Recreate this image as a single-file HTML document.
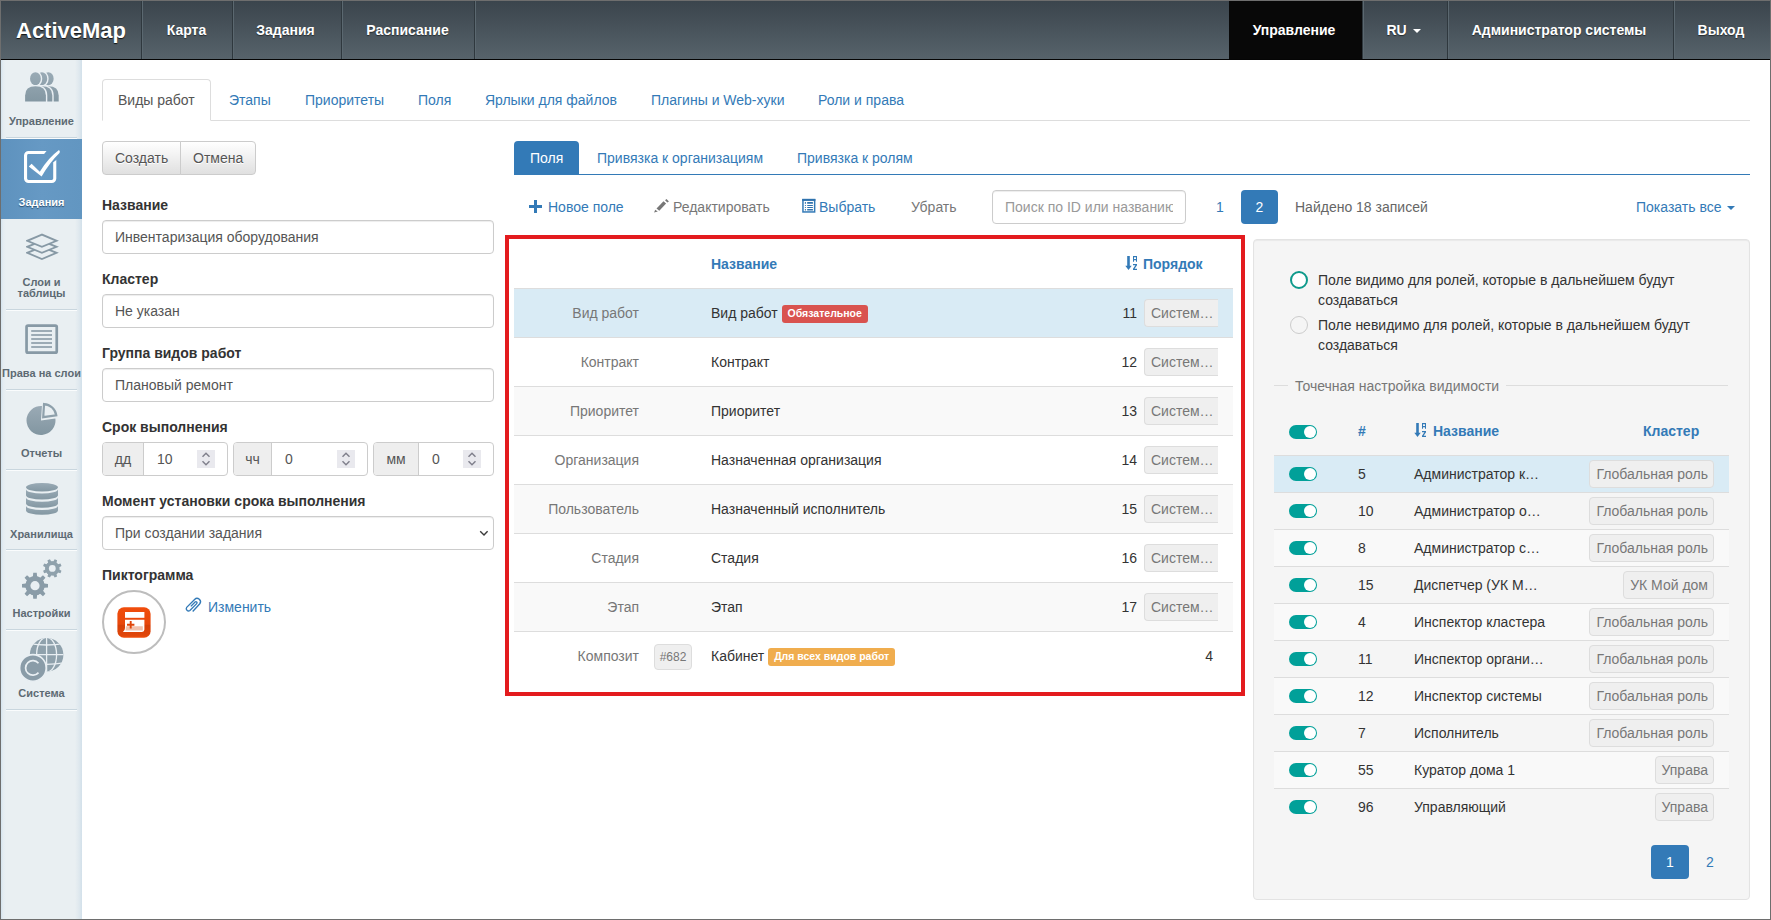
<!DOCTYPE html>
<html><head><meta charset="utf-8">
<style>
*{box-sizing:border-box;margin:0;padding:0}
html,body{width:1771px;height:920px;overflow:hidden;background:#fff}
body{font-family:"Liberation Sans",sans-serif;font-size:14px;color:#333;line-height:20px;position:relative}
.abs{position:absolute}
#frame{position:absolute;left:0;top:0;width:1771px;height:920px;border:1px solid #6e6e6e;pointer-events:none;z-index:50}
/* navbar */
#nav{position:absolute;left:0;top:0;width:1771px;height:60px;background:linear-gradient(#3a444c,#57636b);border-bottom:1px solid #050505}
.brand{position:absolute;left:16px;top:18px;font-size:22px;font-weight:bold;color:#fff;line-height:26px;text-shadow:0 1px 1px #111}
.ni{position:absolute;top:1px;height:58px;line-height:58px;color:#fff;font-weight:bold;font-size:14px;text-align:center;text-shadow:0 1px 1px rgba(0,0,0,.5)}
.sep{position:absolute;top:1px;height:58px;width:2px;border-left:1px solid #2f383e;border-right:1px solid #5b6870}
/* sidebar */
#side{position:absolute;left:1px;top:60px;width:81px;height:859px;background:linear-gradient(90deg,#d3e3ee 0,#e4ecf1 2px,#e9eff2 5px,#e9eff2 74px,#dfe8ee 78px,#d2e0ea 81px)}
.sitem{position:absolute;left:0;width:81px;text-align:center;font-size:11px;font-weight:bold;color:#5d6a73;line-height:12px}
.ssep{position:absolute;left:5px;width:71px;height:2px;border-top:1px solid #c9d6de;border-bottom:1px solid #fafcfd}
/* tabs */
.tab{position:absolute;top:79px;height:42px;line-height:20px;padding:10px 15px;color:#337ab7;border:1px solid transparent}
.tab.act{border:1px solid #ddd;border-bottom-color:#fff;border-radius:4px 4px 0 0;color:#555;background:#fff}
.lbl{position:absolute;left:102px;font-weight:bold;color:#333}
.inp{position:absolute;left:102px;width:392px;height:34px;border:1px solid #ccc;border-radius:4px;padding:6px 12px;color:#555;box-shadow:inset 0 1px 1px rgba(0,0,0,.075)}
.btn{position:absolute;height:34px;padding:6px 12px;border:1px solid #ccc;background:linear-gradient(#fff,#e0e0e0);color:#555;text-shadow:0 1px 0 #fff}
a,.link{color:#337ab7;text-decoration:none}
.mut{color:#777}
.row{position:absolute;left:514px;width:719px;height:49px;border-top:1px solid #ddd}
.c1{position:absolute;right:594px;top:14px;color:#777;white-space:nowrap}
.c2{position:absolute;left:197px;top:14px;color:#333;white-space:nowrap}
.c3{position:absolute;right:96px;top:14px;color:#333}
.sysb{position:absolute;left:630px;top:10px;width:74px;height:28px;border:1px solid #ddd;border-right:none;border-radius:4px 0 0 4px;background:#efefef;color:#777;padding:3px 0 0 6px;overflow:hidden;white-space:nowrap}
.lab{display:inline-block;font-size:10.5px;font-weight:bold;color:#fff;line-height:1;padding:3px 6px 4px;border-radius:3px;vertical-align:1px}
.rrow{position:absolute;left:1274px;width:455px;height:37px;border-top:1px solid #ddd}
.tog{position:absolute;left:15px;width:28px;height:14px;border-radius:7px;background:#01a099}
.tog:after{content:"";position:absolute;right:1.3px;top:1px;width:12px;height:12px;border-radius:50%;background:#fff}
.rn{position:absolute;left:84px;top:8px}
.rname{position:absolute;left:140px;top:8px;white-space:nowrap}
.spin{position:absolute;top:7px;width:18px;height:18px;background:#e9e9ee}
.spin:before{content:"";position:absolute;left:5px;top:4px;width:5px;height:5px;border-left:1.3px solid #666;border-top:1.3px solid #666;transform:rotate(45deg)}
.spin:after{content:"";position:absolute;left:5px;top:8px;width:5px;height:5px;border-right:1.3px solid #666;border-bottom:1.3px solid #666;transform:rotate(45deg)}
.rcl{position:absolute;right:15px;top:4px;height:28px;border:1px solid #ddd;border-radius:4px;background:#efefef;color:#777;padding:3px 5px 0 6px;white-space:nowrap}
</style></head><body>
<div id="nav">
  <div class="brand">ActiveMap</div>
  <div class="sep" style="left:141px"></div>
  <div class="ni" style="left:142px;width:89px">Карта</div>
  <div class="sep" style="left:232px"></div>
  <div class="ni" style="left:232px;width:107px">Задания</div>
  <div class="sep" style="left:341px"></div>
  <div class="ni" style="left:342px;width:131px">Расписание</div>
  <div class="sep" style="left:474px"></div>
  <div class="ni" style="left:1229px;width:133px;background:#080808;text-shadow:none;padding-right:3px">Управление</div>
  <div class="sep" style="left:1362px"></div>
  <div class="ni" style="left:1364px;width:83px;padding-right:4px">RU <span style="display:inline-block;border-left:4px solid transparent;border-right:4px solid transparent;border-top:4px solid #fff;vertical-align:middle;margin-left:2px"></span></div>
  <div class="sep" style="left:1447px"></div>
  <div class="ni" style="left:1449px;width:224px;padding-right:4px">Администратор системы</div>
  <div class="sep" style="left:1673px"></div>
  <div class="ni" style="left:1675px;width:95px;padding-right:3px">Выход</div>
</div>

<div id="side">
  <div class="sitem" style="top:0;height:77px">
    <svg class="abs" style="left:24px;top:11px" width="37" height="32" viewBox="0 0 37 32">
      <defs><linearGradient id="ig3" gradientUnits="userSpaceOnUse" x1="0" y1="0" x2="0" y2="31"><stop offset="0" stop-color="#9aabb6"/><stop offset="1" stop-color="#8397a2"/></linearGradient></defs>
      <g fill="url(#ig3)"><g transform="translate(12.8 0)"><ellipse cx="10.45" cy="7.7" rx="5.4" ry="6.5"/><path d="M0.1 30.6 V24.5 Q0.1 15.3 10.5 15.3 Q20.9 15.3 20.9 24.5 V30.6 Z"/></g><g transform="translate(6.4 0)" stroke="#e9eff3" stroke-width="2.8" paint-order="stroke"><ellipse cx="10.45" cy="7.7" rx="5.4" ry="6.5"/><path d="M0.1 30.6 V24.5 Q0.1 15.3 10.5 15.3 Q20.9 15.3 20.9 24.5 V30.6 Z"/></g><g transform="translate(0 0)" stroke="#e9eff3" stroke-width="2.8" paint-order="stroke"><ellipse cx="10.45" cy="7.7" rx="5.4" ry="6.5"/><path d="M0.1 30.6 V24.5 Q0.1 15.3 10.5 15.3 Q20.9 15.3 20.9 24.5 V30.6 Z"/></g></g>
    </svg>
    <div class="abs" style="left:0;top:55px;width:81px">Управление</div>
  </div>
  <div class="ssep" style="top:77px"></div>
  <div class="sitem" style="top:79px;height:80px;background:linear-gradient(90deg,#5e92be,#6699c4 50%,#6296c1);color:#fff;text-shadow:0 1px 1px #2b4f70">
    <svg class="abs" style="left:23px;top:9px" width="40" height="38" viewBox="0 0 40 38">
      <defs><clipPath id="cbc"><path d="M0 0 H25 L19.3 7 L29.4 14.2 L40 6.1 V38 H0 Z"/></clipPath></defs>
      <rect x="1.55" y="4.45" width="29.2" height="29" rx="3" fill="none" stroke="#fff" stroke-width="3.1" clip-path="url(#cbc)"/>
      <path d="M4.8 18.5 L7.6 15.8 L15.8 23.8 Q24 10 35 2 Q36.5 3.5 35.5 5 Q26 14 17.6 28.6 Z" fill="#fff"/>
    </svg>
    <div class="abs" style="left:0;top:137px;width:81px;top:57px">Задания</div>
  </div>
  <div class="sitem" style="top:159px;height:90px">
    <svg class="abs" style="left:25px;top:13px" width="33" height="30" viewBox="0 0 33 30">
      <g fill="none" stroke="#8799a5" stroke-width="1.8" stroke-linejoin="miter">
      <path d="M15.9 2.6 L1.2 8.8 L15.9 14.8 L30.6 8.8 Z"/>
      <path d="M8.55 11.8 L1.2 14.8 L15.9 20.8 L30.6 14.8 L23.25 11.8"/>
      <path d="M8.55 17.8 L1.2 20.8 L15.9 27 L30.6 20.8 L23.25 17.8"/>
      </g>
    </svg>
    <div class="abs" style="left:0;top:58px;width:81px;line-height:11px">Слои и<br>таблицы</div>
  </div>
  <div class="ssep" style="top:249px"></div>
  <div class="sitem" style="top:251px;height:80px">
    <svg class="abs" style="left:24px;top:13px" width="34" height="31" viewBox="0 0 34 31">
      <rect x="1.55" y="1.55" width="30.2" height="27.1" rx="1.5" fill="none" stroke="#8799a5" stroke-width="2.7"/>
      <g stroke="#8395a1" stroke-width="1.7"><path d="M6.2 7h20.8M6.2 11h20.8M6.2 15h20.8M6.2 19h20.8M6.2 23h20.8"/></g>
    </svg>
    <div class="abs" style="left:0;top:56px;width:81px">Права на слои</div>
  </div>
  <div class="ssep" style="top:329px"></div>
  <div class="sitem" style="top:331px;height:80px">
    <svg class="abs" style="left:25px;top:11px" width="34" height="34" viewBox="0 0 34 34">
      <defs><linearGradient id="ig" x1="0" y1="0" x2="0" y2="1"><stop offset="0" stop-color="#9aaab5"/><stop offset="1" stop-color="#8296a1"/></linearGradient></defs>
      <path d="M15 18.5 L15.96 4.03 A14.5 14.5 0 1 0 29.34 16.38 Z" fill="url(#ig)"/>
      <path d="M17.2 15.2 L18.07 2.03 A13.2 13.2 0 0 1 30.26 13.27 Z" fill="none" stroke="#8ea0ab" stroke-width="2.2" stroke-linejoin="miter"/>
    </svg>
    <div class="abs" style="left:0;top:56px;width:81px">Отчеты</div>
  </div>
  <div class="ssep" style="top:409px"></div>
  <div class="sitem" style="top:411px;height:80px">
    <svg class="abs" style="left:24px;top:12px" width="34" height="33" viewBox="0 0 34 33">
      <defs><linearGradient id="ig2" x1="0" y1="0" x2="0" y2="1"><stop offset="0" stop-color="#9aabb6"/><stop offset="1" stop-color="#8397a2"/></linearGradient></defs>
      <g fill="url(#ig2)">
      <ellipse cx="17" cy="4.3" rx="16" ry="4.3"/><path d="M1 6.2 A16 4.3 0 0 0 33 6.2 V12.3 A16 4.3 0 0 1 1 12.3 Z"/><path d="M1 14.4 A16 4.3 0 0 0 33 14.4 V20.4 A16 4.3 0 0 1 1 20.4 Z"/><path d="M1 22.7 A16 4.3 0 0 0 33 22.7 V27.5 A16 4.3 0 0 1 1 27.5 Z"/>
      </g>
    </svg>
    <div class="abs" style="left:0;top:57px;width:81px">Хранилища</div>
  </div>
  <div class="ssep" style="top:489px"></div>
  <div class="sitem" style="top:491px;height:80px">
    <svg class="abs" style="left:14px;top:1px" width="54" height="54" viewBox="0 0 54 54">
      <g fill="#8a9ca8"><path d="M17.90 24.40 L18.25 20.70 L21.75 20.70 L22.10 24.40 L25.09 25.64 L27.95 23.27 L30.43 25.75 L28.06 28.61 L29.30 31.60 L33.00 31.95 L33.00 35.45 L29.30 35.80 L28.06 38.79 L30.43 41.65 L27.95 44.13 L25.09 41.76 L22.10 43.00 L21.75 46.70 L18.25 46.70 L17.90 43.00 L14.91 41.76 L12.05 44.13 L9.57 41.65 L11.94 38.79 L10.70 35.80 L7.00 35.45 L7.00 31.95 L10.70 31.60 L11.94 28.61 L9.57 25.75 L12.05 23.27 L14.91 25.64 Z"/><circle cx="20" cy="33.7" r="9.600000000000001"/></g><circle cx="20" cy="33.7" r="4.6" fill="#e9eff3"/><g fill="#8fa1ac"><path d="M38.33 9.47 L39.65 7.20 L42.14 8.23 L41.47 10.77 L42.93 12.23 L45.47 11.56 L46.50 14.05 L44.23 15.37 L44.23 17.43 L46.50 18.75 L45.47 21.24 L42.93 20.57 L41.47 22.03 L42.14 24.57 L39.65 25.60 L38.33 23.33 L36.27 23.33 L34.95 25.60 L32.46 24.57 L33.13 22.03 L31.67 20.57 L29.13 21.24 L28.10 18.75 L30.37 17.43 L30.37 15.37 L28.10 14.05 L29.13 11.56 L31.67 12.23 L33.13 10.77 L32.46 8.23 L34.95 7.20 L36.27 9.47 Z"/><circle cx="37.3" cy="16.4" r="7.1"/></g><circle cx="37.3" cy="16.4" r="3.4" fill="#e9eff3"/>
    </svg>
    <div class="abs" style="left:0;top:56px;width:81px">Настройки</div>
  </div>
  <div class="ssep" style="top:569px"></div>
  <div class="sitem" style="top:571px;height:80px">
    <svg class="abs" style="left:19px;top:6px" width="46" height="46" viewBox="0 0 46 46">
      <defs><clipPath id="gc"><circle cx="26.6" cy="17.8" r="16.8"/></clipPath></defs>
      <circle cx="26.6" cy="17.8" r="16.8" fill="#8fa1ac"/>
      <g fill="none" stroke="#e9eff3" stroke-width="1.3" clip-path="url(#gc)">
        <ellipse cx="26.6" cy="17.8" rx="10" ry="17.5"/>
        <path d="M26.6 0 V36 M8 17.6 H46 M8 6.4 Q26.6 9.6 46 6.4 M8 25.6 Q26.6 29 46 25.6"/>
      </g>
      <circle cx="12.9" cy="30.9" r="13.3" fill="#8a9ca8" stroke="#e9eff3" stroke-width="1.6"/>
      <path d="M18.49 26.21 A7.3 7.3 0 1 0 18.49 35.59" fill="none" stroke="#e9eff3" stroke-width="1.7"/>
    </svg>
    <div class="abs" style="left:0;top:56px;width:81px">Система</div>
  </div>
  <div class="ssep" style="top:649px"></div>
</div>

<div id="main">
<!-- top tabs -->
<div class="abs" style="left:102px;top:120px;width:1648px;height:1px;background:#ddd"></div>
<div class="tab act" style="left:102px">Виды работ</div>
<div class="tab" style="left:213px">Этапы</div>
<div class="tab" style="left:289px">Приоритеты</div>
<div class="tab" style="left:402px">Поля</div>
<div class="tab" style="left:469px">Ярлыки для файлов</div>
<div class="tab" style="left:635px">Плагины и Web-хуки</div>
<div class="tab" style="left:802px">Роли и права</div>

<!-- left form -->
<div class="btn" style="left:102px;top:141px;width:79px;border-radius:4px 0 0 4px">Создать</div>
<div class="btn" style="left:180px;top:141px;width:76px;border-radius:0 4px 4px 0">Отмена</div>

<div class="lbl" style="top:195px">Название</div>
<div class="inp" style="top:220px">Инвентаризация оборудования</div>
<div class="lbl" style="top:269px">Кластер</div>
<div class="inp" style="top:294px">Не указан</div>
<div class="lbl" style="top:343px">Группа видов работ</div>
<div class="inp" style="top:368px">Плановый ремонт</div>
<div class="lbl" style="top:417px">Срок выполнения</div>

<div class="abs" style="left:102px;top:442px;width:126px;height:34px;border:1px solid #ccc;border-radius:4px;overflow:hidden">
  <div class="abs" style="left:0;top:0;width:41px;height:32px;background:#eee;border-right:1px solid #ccc;text-align:center;line-height:32px;color:#555">дд</div>
  <div class="abs" style="left:54px;top:6px;color:#555">10</div>
  <svg class="abs" style="left:94px;top:7px" width="18" height="18" viewBox="0 0 18 18"><rect width="18" height="18" fill="#e9e9ee"/><path d="M5.5 6.8 L9 3.3 L12.5 6.8 M5.5 11.2 L9 14.7 L12.5 11.2" fill="none" stroke="#82828e" stroke-width="1.5"/></svg>
</div>
<div class="abs" style="left:233px;top:442px;width:135px;height:34px;border:1px solid #ccc;border-radius:4px;overflow:hidden">
  <div class="abs" style="left:0;top:0;width:38px;height:32px;background:#eee;border-right:1px solid #ccc;text-align:center;line-height:32px;color:#555">чч</div>
  <div class="abs" style="left:51px;top:6px;color:#555">0</div>
  <svg class="abs" style="left:103px;top:7px" width="18" height="18" viewBox="0 0 18 18"><rect width="18" height="18" fill="#e9e9ee"/><path d="M5.5 6.8 L9 3.3 L12.5 6.8 M5.5 11.2 L9 14.7 L12.5 11.2" fill="none" stroke="#82828e" stroke-width="1.5"/></svg>
</div>
<div class="abs" style="left:373px;top:442px;width:121px;height:34px;border:1px solid #ccc;border-radius:4px;overflow:hidden">
  <div class="abs" style="left:0;top:0;width:45px;height:32px;background:#eee;border-right:1px solid #ccc;text-align:center;line-height:32px;color:#555">мм</div>
  <div class="abs" style="left:58px;top:6px;color:#555">0</div>
  <svg class="abs" style="left:89px;top:7px" width="18" height="18" viewBox="0 0 18 18"><rect width="18" height="18" fill="#e9e9ee"/><path d="M5.5 6.8 L9 3.3 L12.5 6.8 M5.5 11.2 L9 14.7 L12.5 11.2" fill="none" stroke="#82828e" stroke-width="1.5"/></svg>
</div>

<div class="lbl" style="top:491px">Момент установки срока выполнения</div>
<div class="inp" style="top:516px">При создании задания
  <svg class="abs" style="right:4px;top:12.8px" width="10" height="7" viewBox="0 0 10 7"><path d="M1.2 1.3 L5 5 L8.6 1.2" fill="none" stroke="#3a3a3a" stroke-width="1.4"/></svg>
</div>
<div class="lbl" style="top:565px">Пиктограмма</div>
<div class="abs" style="left:102px;top:590px;width:64px;height:64px;border:2px solid #bdbdbd;border-radius:50%"></div>
<svg class="abs" style="left:117px;top:607px" width="34" height="31" viewBox="0 0 34 31">
  <defs><linearGradient id="og" x1="0" y1="0" x2="0" y2="1"><stop offset="0" stop-color="#f04d0c"/><stop offset=".55" stop-color="#e8470b"/><stop offset=".6" stop-color="#d64008"/><stop offset=".92" stop-color="#e0460a"/><stop offset="1" stop-color="#f0500e"/></linearGradient></defs>
  <rect x="0.4" y="0.3" width="33.2" height="30.4" rx="6.5" fill="url(#og)"/>
  <rect x="8" y="5" width="19.4" height="5.8" fill="#fff"/>
  <path d="M8 12.8 H27.4 V22.6 Q27.4 25 25 25 H5.9 Q8 23.5 8 21 Z" fill="#fff"/>
  <path d="M8.9 19.3 H25.8 V23.4 H8.6 Z" fill="#f1c2ad"/>
  <path d="M10 17.8 h7.4 M13.7 14.1 v7.4" stroke="#e0460a" stroke-width="1.9"/>
</svg>
<svg class="abs" style="left:180px;top:594px" width="26" height="22" viewBox="0 0 26 22">
  <path d="M12.7 17.5 L19.6 10 A3.4 3.4 0 0 0 14.6 5.4 L6.7 13.4 A2.25 2.25 0 0 0 9.9 16.5 L16.7 9.6 A1.13 1.13 0 0 0 15.1 8 L10.8 12.4" fill="none" stroke="#337ab7" stroke-width="1.35"/>
</svg>
<div class="abs link" style="left:208px;top:597px">Изменить</div>

<!-- middle subtabs -->
<div class="abs" style="left:514px;top:174px;width:1236px;height:1px;background:#337ab7"></div>
<div class="abs" style="left:514px;top:141px;width:65px;height:34px;background:#337ab7;border-radius:4px 4px 0 0;color:#fff;padding:7px 0 0 16px">Поля</div>
<div class="abs link" style="left:597px;top:148px">Привязка к организациям</div>
<div class="abs link" style="left:797px;top:148px">Привязка к ролям</div>

<!-- toolbar -->
<svg class="abs" style="left:529px;top:200px" width="13" height="13" viewBox="0 0 13 13"><path d="M5 0h3v5h5v3h-5v5h-3v-5h-5v-3h5z" fill="#337ab7"/></svg>
<div class="abs link" style="left:548px;top:197px">Новое поле</div>
<svg class="abs" style="left:650px;top:196px" width="22" height="20" viewBox="0 0 22 20"><g fill="#777"><path d="M6.5 12.6 L13.5 5.2 L16.1 7.4 L9.3 14.8 Z"/><path d="M4.1 16.5 L5.2 13.7 L7.8 15.4 Z"/><path d="M15 4.3 L16.5 3 L18.9 5.4 L17.4 6.5 Z"/></g></svg>
<div class="abs mut" style="left:673px;top:197px">Редактировать</div>
<svg class="abs" style="left:798px;top:196px" width="22" height="20" viewBox="0 0 22 20"><rect x="4.95" y="3.65" width="11.7" height="12.3" fill="none" stroke="#337ab7" stroke-width="1.5"/><rect x="4.2" y="2.9" width="13.2" height="2" fill="#2f72ad"/><g fill="#2f72ad"><rect x="6.8" y="6.1" width="1.2" height="1.7" rx=".5"/><rect x="9.1" y="6.1" width="5.9" height="1.7" rx=".6"/><rect x="6.8" y="8.9" width="1.2" height="1.1" rx=".5"/><rect x="9.1" y="8.9" width="5.9" height="1.1" rx=".6"/><rect x="6.8" y="11" width="1.2" height="1.1" rx=".5"/><rect x="9.1" y="11" width="5.9" height="1.1" rx=".6"/><rect x="6.8" y="12.9" width="1.2" height="1.6" rx=".5"/><rect x="9.1" y="12.9" width="5.9" height="1.6" rx=".6"/></g></svg>
<div class="abs link" style="left:819px;top:197px">Выбрать</div>
<div class="abs mut" style="left:911px;top:197px">Убрать</div>
<div class="abs" style="left:992px;top:190px;width:194px;height:34px;border:1px solid #ccc;border-radius:4px;padding:6px 12px;color:#999;white-space:nowrap;box-shadow:inset 0 1px 1px rgba(0,0,0,.075)"><div style="width:168px;overflow:hidden">Поиск по ID или названию</div></div>
<div class="abs link" style="left:1216px;top:197px">1</div>
<div class="abs" style="left:1241px;top:190px;width:37px;height:34px;background:#337ab7;border-radius:4px;color:#fff;text-align:center;padding-top:7px">2</div>
<div class="abs mut" style="left:1295px;top:197px;color:#666">Найдено 18 записей</div>
<div class="abs link" style="left:1636px;top:197px">Показать все <span style="display:inline-block;border-left:4px solid transparent;border-right:4px solid transparent;border-top:4px solid #337ab7;vertical-align:middle;margin-left:2px"></span></div>

<!-- red box & table -->
<div class="abs" style="left:505px;top:235px;width:740px;height:461px;border:4px solid #e31b1e;z-index:5"></div>
<div class="abs" style="left:711px;top:254px;color:#337ab7;font-weight:bold">Название</div>
<svg class="abs" style="left:1125px;top:256px" width="13" height="15" viewBox="0 0 13 15"><g fill="#337ab7"><rect x="2.2" y="0" width="2.6" height="10.5"/><path d="M0.3 9.8 H6.7 L3.5 14 Z"/><path fill-rule="evenodd" d="M8 0 H12 V5.8 H11 V4.2 H9 V5.8 H8 Z M9 1.2 H11 V3 H9 Z"/><path d="M8 8 H12 V9.3 L9.6 12.7 H12 V14 H8 V12.7 L10.4 9.3 H8 Z"/></g></svg>
<div class="abs" style="left:1143px;top:254px;color:#337ab7;font-weight:bold">Порядок</div>
<div class="row" style="top:288px;background:#d9ebf5"><div class="c1">Вид работ</div><div class="c2">Вид работ <span class="lab" style="background:#d9534f">Обязательное</span></div><div class="c3">11</div><div class="sysb">Систем…</div></div><div class="row" style="top:337px;background:#fff"><div class="c1">Контракт</div><div class="c2">Контракт </div><div class="c3">12</div><div class="sysb">Систем…</div></div><div class="row" style="top:386px;background:#f9f9f9"><div class="c1">Приоритет</div><div class="c2">Приоритет </div><div class="c3">13</div><div class="sysb">Систем…</div></div><div class="row" style="top:435px;background:#fff"><div class="c1">Организация</div><div class="c2">Назначенная организация </div><div class="c3">14</div><div class="sysb">Систем…</div></div><div class="row" style="top:484px;background:#f9f9f9"><div class="c1">Пользователь</div><div class="c2">Назначенный исполнитель </div><div class="c3">15</div><div class="sysb">Систем…</div></div><div class="row" style="top:533px;background:#fff"><div class="c1">Стадия</div><div class="c2">Стадия </div><div class="c3">16</div><div class="sysb">Систем…</div></div><div class="row" style="top:582px;background:#f9f9f9"><div class="c1">Этап</div><div class="c2">Этап </div><div class="c3">17</div><div class="sysb">Систем…</div></div><div class="row" style="top:631px;background:#fff"><div class="c1">Композит</div><div class="abs" style="left:140px;top:12px;width:38px;height:26px;border:1px solid #ddd;border-radius:4px;background:#efefef;color:#777;font-size:12px;text-align:center;line-height:24px">#682</div><div class="c2">Кабинет <span class="lab" style="background:#f0ad4e">Для всех видов работ</span></div><div class="c3" style="right:20px">4</div></div>
<div class="abs" style="left:1253px;top:239px;width:497px;height:661px;background:#f5f5f5;border:1px solid #e3e3e3;border-radius:4px;box-shadow:inset 0 1px 1px rgba(0,0,0,.05)"></div>
<div class="abs" style="left:1290px;top:271px;width:18px;height:18px;border:2.5px solid #0e9a8b;border-radius:50%;background:#fff"></div>
<div class="abs" style="left:1318px;top:270px;width:400px">Поле видимо для ролей, которые в дальнейшем будут<br>создаваться</div>
<div class="abs" style="left:1290px;top:316px;width:18px;height:18px;border:1px solid #ccc;border-radius:50%;background:#f5f5f5"></div>
<div class="abs" style="left:1318px;top:315px;width:400px">Поле невидимо для ролей, которые в дальнейшем будут<br>создаваться</div>
<div class="abs" style="left:1274px;top:385px;width:454px;height:1px;background:#ddd"></div>
<div class="abs" style="left:1288px;top:376px;padding:0 7px;background:#f5f5f5;color:#777">Точечная настройка видимости</div>

<div class="abs" style="left:1274px;top:418px;width:454px;height:37px">
  <div class="tog" style="top:7px"></div>
  <div class="rn" style="left:84px;top:3px;color:#337ab7;font-weight:bold">#</div>
  <svg class="abs" style="left:140px;top:5px" width="13" height="15" viewBox="0 0 13 15"><g fill="#337ab7"><rect x="2.2" y="0" width="2.6" height="10.5"/><path d="M0.3 9.8 H6.7 L3.5 14 Z"/><path fill-rule="evenodd" d="M8 0 H12 V5.8 H11 V4.2 H9 V5.8 H8 Z M9 1.2 H11 V3 H9 Z"/><path d="M8 8 H12 V9.3 L9.6 12.7 H12 V14 H8 V12.7 L10.4 9.3 H8 Z"/></g></svg>
  <div class="rname" style="left:159px;top:3px;color:#337ab7;font-weight:bold">Название</div>
  <div class="abs" style="left:369px;top:3px;color:#337ab7;font-weight:bold">Кластер</div>
</div>
<div class="rrow" style="top:455px;background:#d9ebf5"><div class="tog" style="top:11px"></div><div class="rn">5</div><div class="rname">Администратор к…</div><div class="rcl">Глобальная роль</div></div><div class="rrow" style="top:492px;background:transparent"><div class="tog" style="top:11px"></div><div class="rn">10</div><div class="rname">Администратор о…</div><div class="rcl">Глобальная роль</div></div><div class="rrow" style="top:529px;background:#f9f9f9"><div class="tog" style="top:11px"></div><div class="rn">8</div><div class="rname">Администратор с…</div><div class="rcl">Глобальная роль</div></div><div class="rrow" style="top:566px;background:transparent"><div class="tog" style="top:11px"></div><div class="rn">15</div><div class="rname">Диспетчер (УК М…</div><div class="rcl">УК Мой дом</div></div><div class="rrow" style="top:603px;background:#f9f9f9"><div class="tog" style="top:11px"></div><div class="rn">4</div><div class="rname">Инспектор кластера</div><div class="rcl">Глобальная роль</div></div><div class="rrow" style="top:640px;background:transparent"><div class="tog" style="top:11px"></div><div class="rn">11</div><div class="rname">Инспектор органи…</div><div class="rcl">Глобальная роль</div></div><div class="rrow" style="top:677px;background:#f9f9f9"><div class="tog" style="top:11px"></div><div class="rn">12</div><div class="rname">Инспектор системы</div><div class="rcl">Глобальная роль</div></div><div class="rrow" style="top:714px;background:transparent"><div class="tog" style="top:11px"></div><div class="rn">7</div><div class="rname">Исполнитель</div><div class="rcl">Глобальная роль</div></div><div class="rrow" style="top:751px;background:#f9f9f9"><div class="tog" style="top:11px"></div><div class="rn">55</div><div class="rname">Куратор дома 1</div><div class="rcl">Управа</div></div><div class="rrow" style="top:788px;background:transparent"><div class="tog" style="top:11px"></div><div class="rn">96</div><div class="rname">Управляющий</div><div class="rcl">Управа</div></div>
<div class="abs" style="left:1651px;top:845px;width:38px;height:34px;background:#337ab7;border-radius:4px;color:#fff;text-align:center;padding-top:7px">1</div>
<div class="abs link" style="left:1706px;top:852px">2</div>
</div>

<div id="frame"></div>
</body></html>
